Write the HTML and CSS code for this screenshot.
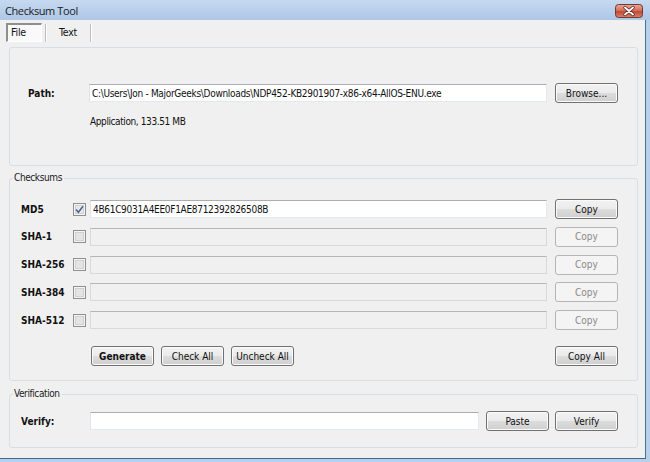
FILE: index.html
```html
<!DOCTYPE html>
<html lang="en">
<head>
<meta charset="UTF-8">
<title>Checksum Tool</title>
<link rel="stylesheet" href="styles.css">
</head>
<body>
<div class="window">
  <!-- title bar -->
  <div class="titlebar">
    <span class="title">Checksum Tool</span>
    <div class="close">
      <svg width="28" height="14" viewBox="0 0 28 14">
        <defs>
          <linearGradient id="cg" x1="0" y1="0" x2="0" y2="1">
            <stop offset="0" stop-color="#e9a99b"/>
            <stop offset="0.45" stop-color="#d5705c"/>
            <stop offset="0.55" stop-color="#c24a35"/>
            <stop offset="1" stop-color="#d9846c"/>
          </linearGradient>
        </defs>
        <rect x="0.5" y="0.5" width="27" height="13" rx="3" fill="url(#cg)" stroke="#6e3b33"/>
        <path d="M10 3.5 L18 10.5 M18 3.5 L10 10.5" stroke="#5a2620" stroke-width="3.4" stroke-linecap="round"/>
        <path d="M10 3.5 L18 10.5 M18 3.5 L10 10.5" stroke="#fff" stroke-width="1.8" stroke-linecap="round"/>
      </svg>
    </div>
  </div>

  <div class="client">
    <!-- tabs -->
    <div class="tabs">
      <div class="tab selected">File</div>
      <div class="sep"></div>
      <div class="tab">Text</div>
      <div class="sep"></div>
    </div>

    <!-- file page -->
    <div class="page">
      <div class="row">
        <span class="lbl path-lbl">Path:</span>
        <input class="field" type="text" value="C:\Users\Jon - MajorGeeks\Downloads\NDP452-KB2901907-x86-x64-AllOS-ENU.exe">
        <button class="btn side">Browse...</button>
      </div>
      <div class="file-info">Application, 133.51 MB</div>
    </div>

    <!-- checksums -->
    <fieldset class="group">
      <legend>Checksums</legend>
      <div class="group-body sums">
        <div class="row">
          <span class="lbl">MD5</span>
          <span class="cb checked">
            <svg width="13" height="13" viewBox="0 0 13 13"><rect x="0.5" y="0.5" width="12" height="12" fill="#f4f4f4" stroke="#8e8f8f"/><rect x="2.5" y="2.5" width="8" height="8" fill="#e8e8e8" stroke="#d0d0d0"/><path d="M3 6.5 L5.4 9.2 L10 3.2" fill="none" stroke="#4a6296" stroke-width="1.5"/></svg>
          </span>
          <input class="field" type="text" value="4B61C9031A4EE0F1AE8712392826508B">
          <button class="btn side">Copy</button>
        </div>
        <div class="row">
          <span class="lbl">SHA-1</span>
          <span class="cb"><svg width="13" height="13" viewBox="0 0 13 13"><rect x="0.5" y="0.5" width="12" height="12" fill="#f4f4f4" stroke="#8e8f8f"/><rect x="2.5" y="2.5" width="8" height="8" fill="#e4e4e4" stroke="#d0d0d0"/></svg></span>
          <input class="field" type="text" disabled>
          <button class="btn side" disabled>Copy</button>
        </div>
        <div class="row">
          <span class="lbl">SHA-256</span>
          <span class="cb"><svg width="13" height="13" viewBox="0 0 13 13"><rect x="0.5" y="0.5" width="12" height="12" fill="#f4f4f4" stroke="#8e8f8f"/><rect x="2.5" y="2.5" width="8" height="8" fill="#e4e4e4" stroke="#d0d0d0"/></svg></span>
          <input class="field" type="text" disabled>
          <button class="btn side" disabled>Copy</button>
        </div>
        <div class="row">
          <span class="lbl">SHA-384</span>
          <span class="cb"><svg width="13" height="13" viewBox="0 0 13 13"><rect x="0.5" y="0.5" width="12" height="12" fill="#f4f4f4" stroke="#8e8f8f"/><rect x="2.5" y="2.5" width="8" height="8" fill="#e4e4e4" stroke="#d0d0d0"/></svg></span>
          <input class="field" type="text" disabled>
          <button class="btn side" disabled>Copy</button>
        </div>
        <div class="row">
          <span class="lbl">SHA-512</span>
          <span class="cb"><svg width="13" height="13" viewBox="0 0 13 13"><rect x="0.5" y="0.5" width="12" height="12" fill="#f4f4f4" stroke="#8e8f8f"/><rect x="2.5" y="2.5" width="8" height="8" fill="#e4e4e4" stroke="#d0d0d0"/></svg></span>
          <input class="field" type="text" disabled>
          <button class="btn side" disabled>Copy</button>
        </div>
        <div class="actions">
          <button class="btn bold">Generate</button>
          <button class="btn">Check All</button>
          <button class="btn">Uncheck All</button>
          <button class="btn side push">Copy All</button>
        </div>
      </div>
    </fieldset>

    <!-- verification -->
    <fieldset class="group verify">
      <legend>Verification</legend>
      <div class="group-body">
        <div class="row">
          <span class="lbl wide">Verify:</span>
          <input class="field" type="text">
          <button class="btn paste">Paste</button>
          <button class="btn verify-btn">Verify</button>
        </div>
      </div>
    </fieldset>
  </div>
</div>
</body>
</html>
```

FILE: styles.css
```css
*{box-sizing:border-box;}
body{
  margin:0;
  background:#b9d0ea;
  font-family:"DejaVu Sans Condensed","DejaVu Sans",sans-serif;
  font-stretch:condensed;
  font-size:10px;
  color:#111;
}
.window{width:650px;height:462px;display:flex;flex-direction:column;}

/* title bar */
.titlebar{
  height:20px;
  display:flex;
  align-items:flex-start;
  background:linear-gradient(#c6d9ef,#adc7e7);
}
.title{
  font-family:"Open Sans",sans-serif;
  font-stretch:normal;
  font-size:11px;
  letter-spacing:-0.4px;
  line-height:21px;
  padding-left:5px;
  color:#1b1b1b;
}
.close{margin:4px 7px 0 auto;height:14px;}
.close svg{display:block;}

/* client area */
.client{
  height:439px;
  margin-right:4px;
  background:#f0f0f0;
  border-right:1px solid #48708f;
  border-bottom:1px solid #3f6a86;
}

/* tabs */
.tabs{display:flex;padding:3px 0 0 6px;height:22px;}
.tab{height:19px;line-height:18px;font-size:10.5px;text-align:center;letter-spacing:-0.2px;}
.tab.selected{
  width:36px;
  border:1px solid #fff;
  border-top:2px solid #8f8f8f;
  border-left:2px solid #8f8f8f;
  background:#f9f9f9;
  text-align:left;
  padding-left:3px;
  line-height:15px;
}
.tab:not(.selected){width:40px;padding-left:2px;}
.sep{width:2px;height:18px;margin:1px 0 0 3px;border-left:1px solid #bdbdbd;border-right:1px solid #fff;}
.tab + .sep + .tab + .sep{margin-left:3px;}

/* file page */
.page{
  margin:5px 7px 0 9px;
  height:119px;
  border:1px solid #d5dfe5;
  border-radius:3px;
  padding:35px 19px 0 18px;
}
.row{display:flex;align-items:center;height:20px;}
.lbl{width:52px;font-weight:bold;font-size:10px;white-space:nowrap;}
.path-lbl{width:61px;}
.lbl.wide{width:69px;}
.file-info{margin:13px 0 0 62px;line-height:12px;font-size:10px;letter-spacing:-0.4px;}

/* inputs */
.field{
  flex:1;
  min-width:0;
  height:18px;
  margin:0;
  padding:0 0 0 2px;
  font:inherit;
  font-size:10px;
  letter-spacing:-0.3px;
  color:#111;
  background:#fff;
  border:1px solid #e3e9ef;
  border-top-color:#abadb3;
  border-left-color:#e2e3ea;
  outline:none;
}
.field:disabled{background:#f0f0f0;border-color:#d9d9d9;border-top-color:#b5b5b5;}

/* checkbox */
.cb{width:13px;height:13px;margin-right:4px;}
.cb svg{display:block;}

/* buttons */
.btn{
  width:63px;
  height:20px;
  margin:0;
  padding:0;
  font:inherit;
  font-size:10px;
  color:#111;
  border:1px solid #707070;
  border-radius:3px;
  background:linear-gradient(#f2f2f2 0%,#ebebeb 50%,#dddddd 50%,#cfcfcf 100%);
  box-shadow:inset 0 0 0 1px #fbfbfb;
}
.btn:disabled{
  color:#8a8a8a;
  border-color:#b5b5b5;
  background:#f4f4f4;
  box-shadow:none;
}
.btn.bold{font-weight:bold;}
.side{margin-left:8px;}

/* group boxes */
.group{
  margin:6px 7px 0 9px;
  padding:0;
  min-width:0;
  border:1px solid #d5dfe5;
  border-radius:3px;
}
.group legend{
  margin-left:3px;
  padding:0 2px 0 1px;
  font-size:10px;
  letter-spacing:-0.4px;
  line-height:12px;
  color:#222;
}
.group-body{padding:15px 19px 14px 11px;}
.sums .row + .row{margin-top:7.75px;}
.actions{display:flex;gap:7px;margin-top:16px;padding-left:70px;}
.actions .push{margin-left:auto;}

.verify{margin-top:7px;}
.verify .group-body{padding:11px 19px 16px 11px;}
.paste{margin-left:7px;}
.verify-btn{margin-left:6px;}
```
